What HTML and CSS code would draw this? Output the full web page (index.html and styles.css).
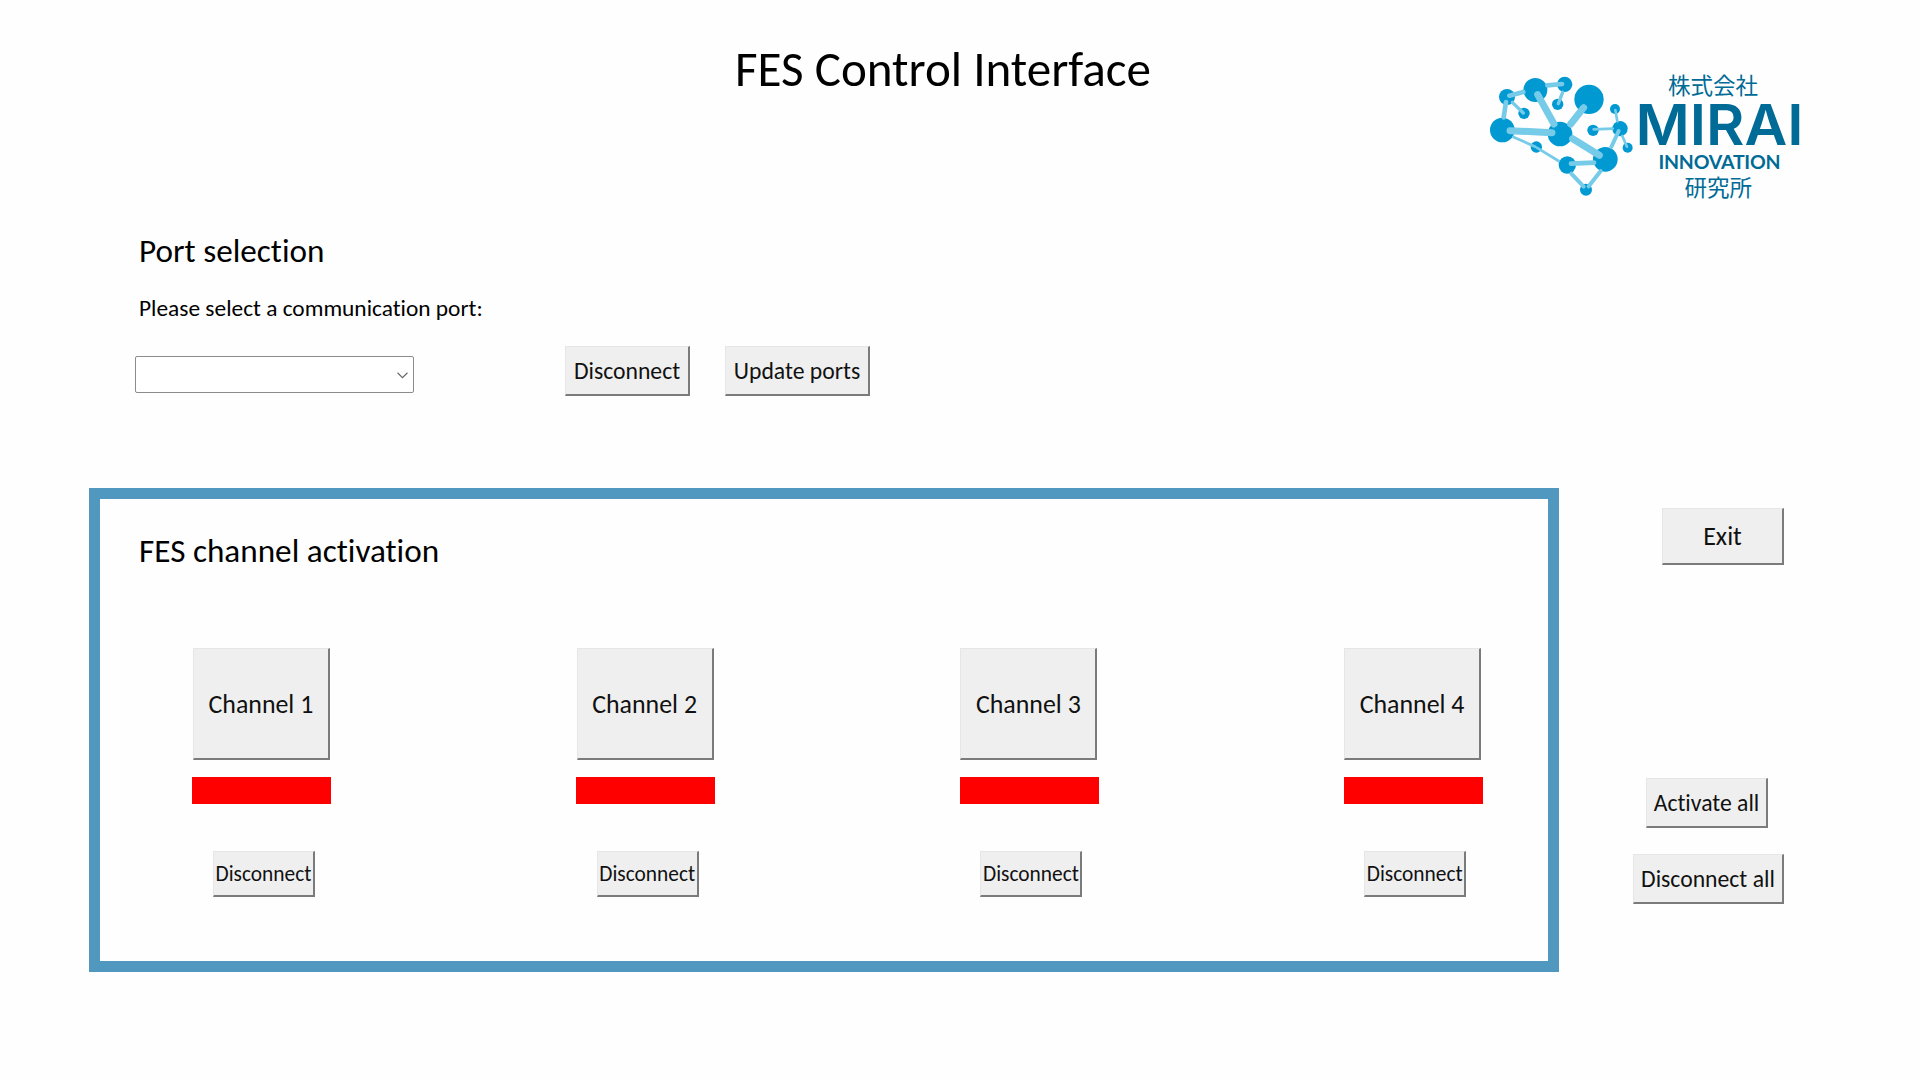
FILE: index.html
```html
<!DOCTYPE html>
<html lang="en">
<head>
<meta charset="utf-8">
<title>FES Control Interface</title>
<link rel="stylesheet" href="styles.css">
</head>
<body>
<header class="header">
  <h1 class="title">FES Control Interface</h1>
  <svg class="logo" viewBox="1480 60 340 150" role="img" aria-label="Mirai Innovation">
    <g transform="translate(1470 60) scale(.33333)">
      <g fill="#0099d2">
        <circle cx="111" cy="111" r="24"/><circle cx="196" cy="90" r="36"/><circle cx="284" cy="73" r="23"/>
        <circle cx="162" cy="160" r="17"/><circle cx="263" cy="133" r="17"/><circle cx="357" cy="118" r="44"/>
        <circle cx="97" cy="210" r="37"/><circle cx="270" cy="222" r="37"/><circle cx="199" cy="261" r="17"/>
        <circle cx="292" cy="315" r="26"/><circle cx="406" cy="298" r="37"/><circle cx="348" cy="389" r="18"/>
        <circle cx="369" cy="211" r="17"/><circle cx="450" cy="206" r="23"/><circle cx="435" cy="147" r="15"/>
        <circle cx="473" cy="263" r="15"/>
      </g>
      <g class="links">
        <path stroke-width="21" d="M120 212 246 218M203 104 252 192M341 143 302 192M308 236 388 286"/>
        <path stroke-width="14" d="M118 107 160 96M232 76 276 72M108 126 101 172M303 311 372 308"/>
        <path stroke-width="10" d="M127 127 160 159M278 97 265 131"/>
        <path stroke-width="8" d="M130 231 196 260M200 263 266 303M371 208 428 206M436 150 442 184M457 228 471 260"/>
        <path stroke-width="12" d="M446 213 424 261M304 341 341 380M392 333 356 379"/>
      </g>
    </g>
    <g class="wordmark">
      <text class="kanji" x="1668" y="94" textLength="90">株式会社</text>
      <text class="mirai" x="1635.500" y="144.500" textLength="168" lengthAdjust="spacingAndGlyphs">MIRAI</text>
      <text class="innovation" x="1658.500" y="169" textLength="122">INNOVATION</text>
      <text class="kanji" x="1684.500" y="195.500" textLength="67.500">研究所</text>
    </g>
  </svg>
</header>

<section class="ports">
  <h2 class="heading">Port selection</h2>
  <p class="prompt">Please select a communication port:</p>
  <div class="port-row">
    <div class="combo" role="combobox" aria-label="Communication port">
      <svg class="chevron" viewBox="0 0 10 6"><path d="M.5 .5 5 5 9.500 .5"/></svg>
    </div>
    <button class="btn port-disconnect">Disconnect</button>
    <button class="btn port-update">Update ports</button>
  </div>
</section>

<main class="main">
  <section class="panel">
    <h2 class="heading">FES channel activation</h2>
    <div class="channels">
      <div class="channel"><button class="btn channel-btn">Channel 1</button><div class="status"></div><button class="btn small">Disconnect</button></div>
      <div class="channel"><button class="btn channel-btn">Channel 2</button><div class="status"></div><button class="btn small">Disconnect</button></div>
      <div class="channel"><button class="btn channel-btn">Channel 3</button><div class="status"></div><button class="btn small">Disconnect</button></div>
      <div class="channel"><button class="btn channel-btn">Channel 4</button><div class="status"></div><button class="btn small">Disconnect</button></div>
    </div>
  </section>
  <aside class="side">
    <button class="btn exit">Exit</button>
    <button class="btn activate">Activate all</button>
    <button class="btn disconnect-all">Disconnect all</button>
  </aside>
</main>
</body>
</html>
```

FILE: styles.css
```css
* { box-sizing: border-box; }

body {
  margin: 0;
  height: 1080px;
  overflow: hidden;
  background: #fefefe;
  color: #000;
  font-family: Carlito, Calibri, Lato, sans-serif;
  font-variant-ligatures: none;
}

h1, h2, p { margin: 0; font-weight: 400; white-space: nowrap; }

.header {
  display: flex;
  justify-content: space-between;
  align-items: flex-start;
  height: 230px;
  padding: 39px 100px 0 735px;
}
.title { font-size: 49.1px; line-height: 60px; }
.logo { width: 340px; height: 150px; margin-top: 21px; }
.links { fill: none; stroke: #75cbe8; stroke-linecap: round; }
.wordmark { fill: #006b96; }
.kanji { font: 400 22.5px/1 "Noto Sans CJK JP", sans-serif; }
.mirai { font: 600 57px/1 Inter, "Liberation Sans", sans-serif; }
.innovation { font: 700 19.5px/1 Lato, sans-serif; }

.ports { height: 258px; padding: 1px 0 0 139px; }
.heading { font-size: 33.2px; line-height: 40px; }
.prompt { margin-top: 22px; font-size: 23.4px; line-height: 30px; }
.port-row { display: flex; align-items: flex-start; margin: 23px 0 0 -4px; }
.combo {
  display: flex;
  justify-content: flex-end;
  align-items: center;
  width: 279px;
  height: 37px;
  margin-top: 10px;
  padding-right: 5px;
  border: 1px solid #8c8c8c;
  border-radius: 2px;
  background: #fff;
}
.chevron { width: 11px; height: 7px; margin-top: 1px; fill: none; stroke: #666; }

.btn {
  flex: none;
  margin: 0;
  padding: 0;
  border: 1px solid #e6e6e6;
  border-width: 1px 2px 2px 1px;
  border-right-color: #7b7b7b;
  border-bottom-color: #7b7b7b;
  background: #efefef;
  color: #111;
  font: 23.7px/28px Carlito, Calibri, Lato, sans-serif;
  font-variant-ligatures: none;
  white-space: nowrap;
}
.port-disconnect { width: 125px; height: 50px; margin-left: 151px; }
.port-update { width: 145px; height: 50px; margin-left: 35px; }

.main { display: flex; padding-left: 89px; }
.panel {
  width: 1470px;
  height: 484px;
  padding: 32px 65.4px 0 39px;
  border: 11px solid #5098bf;
}
.channels { display: flex; justify-content: space-between; margin: 77px 0 0 53.4px; }
.channel { display: flex; flex-direction: column; width: 139px; }
.channel-btn { width: 137px; height: 112px; margin-left: .5px; font-size: 25.9px; }
.status { height: 27px; margin: 17px 0 47px; background: #f00; }
.small { width: 102px; height: 46px; margin-left: 20.6px; font-size: 21.4px; }

.side { display: flex; flex-direction: column; align-items: flex-end; width: 225px; padding-top: 20px; }
.exit { width: 122px; height: 57px; font-size: 26px; }
.activate { width: 122px; height: 50px; margin: 213px 16px 26px 0; }
.disconnect-all { width: 151px; height: 50px; }
```
